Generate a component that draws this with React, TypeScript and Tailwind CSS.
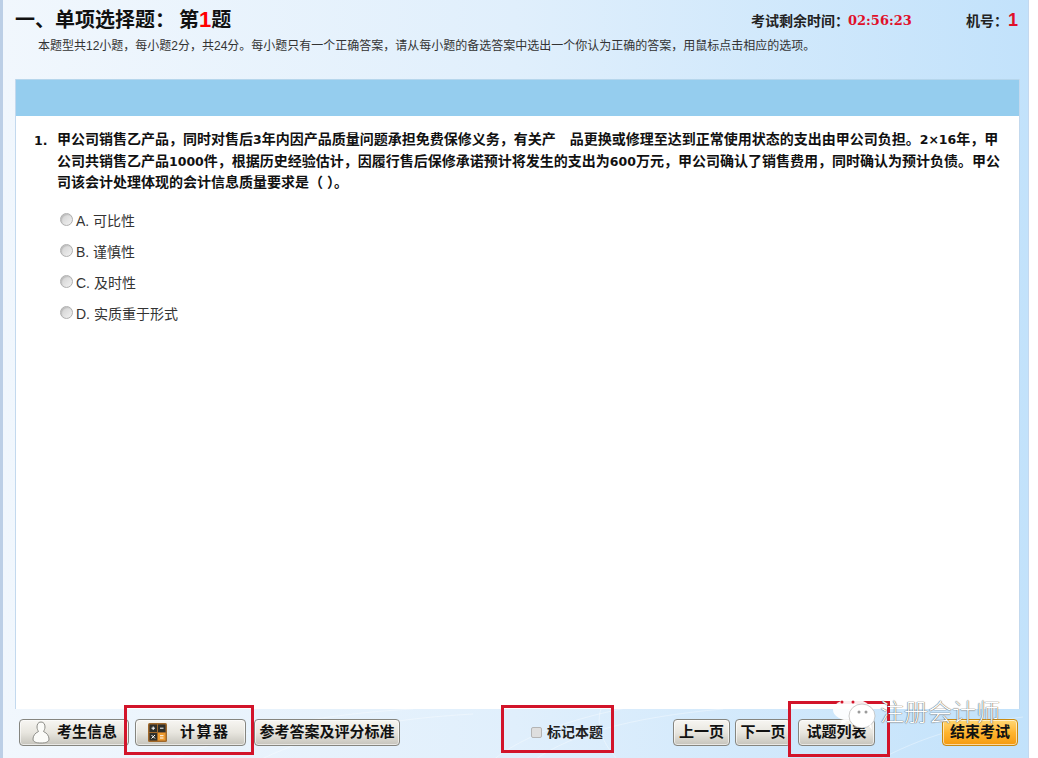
import React from "react";

const FONT = "font-['Liberation_Sans','Noto_Sans_CJK_SC',sans-serif]";
const NUM = "font-['DejaVu_Sans',sans-serif] text-[12.500px] leading-none";

function Btn({ w, children, className = "" }: { w: string; children: React.ReactNode; className?: string }) {
  return (
    <div
      className={`${w} h-[27px] shrink-0 flex items-center justify-center rounded-[4px] border border-[#85857f] bg-gradient-to-b from-[#f7f6f2] via-[#e8e6df] to-[#c6c4bc] text-[15px] font-bold text-[#111] shadow-[inset_0_0_0_1px_rgba(255,255,255,0.6)] ${className}`}
    >
      {children}
    </div>
  );
}

function Opt({ t }: { t: string }) {
  return (
    <div className="flex items-center h-[31px] text-[14px] text-[#333]">
      <span className="w-[13px] h-[13px] mr-[3px] -mt-[4px] rounded-full border border-[#b0b0b0] bg-gradient-to-br from-[#cfcfcf] to-[#f2f2f2] shadow-[inset_1px_1px_1px_rgba(0,0,0,0.12)]" />
      <span>{t}</span>
    </div>
  );
}

function Calc() {
  return (
    <svg width="19" height="19" viewBox="0 0 19 19">
      <rect width="19" height="19" rx="1.500" fill="#a0692c" />
      <rect x="1.500" y="1.500" width="7.500" height="7.500" fill="#2f2f2a" />
      <rect x="10" y="1.500" width="7.500" height="7.500" fill="#2f2f2a" />
      <rect x="1.500" y="10" width="7.500" height="7.500" fill="#2f2f2a" />
      <rect x="10" y="10" width="7.500" height="7.500" fill="#ee9a2e" />
      <path d="M3.500 5.200h3.500M5.200 3.500v3.500M12 5.200h3.500M3.500 12l3.500 3.500M7 12l-3.500 3.500M12 12.700h3.500M12 15h3.500" stroke="#fff" strokeWidth="1" fill="none" />
    </svg>
  );
}

function Person() {
  return (
    <svg width="18" height="23" viewBox="0 0 18 23">
      <path
        d="M9 1C6 1 5 3.500 5 6c0 2 1 3.500 1.500 4.500C3 12 1 15 1 18c0 3 3 4 8 4s8-1 8-4c0-3-2-6-5.500-7.500C12 9.500 13 8 13 6c0-2.500-1-5-4-5z"
        fill="#fbfbf8"
        stroke="#8d8d88"
        strokeWidth="1"
      />
    </svg>
  );
}

function RedBox({ className }: { className: string }) {
  return <div className={`absolute border-[3px] border-[#d2142a] pointer-events-none ${className}`} />;
}

export default function App() {
  return (
    <div className={`relative w-[1038px] h-[758px] overflow-hidden bg-white ${FONT}`}>
      <div className="w-[1029px] h-full flex flex-col border-l-[3px] border-r border-l-[#bccfe6] border-r-[#c4d8ee] bg-gradient-to-r from-[#f1f7fd] via-[#e0effc] to-[#c2e2fb]">
        <header className="h-[79px] shrink-0 pl-[12px] pr-[10px]">
          <div className="flex items-start justify-between pt-[6px]">
            <h1 className="text-[20px] leading-[28px] font-bold text-[#111]">
              一、单项选择题：<span className="ml-[4px]">第</span>
              <span className="text-[#f00] text-[22px]">1</span>题
            </h1>
            <div className="flex items-center h-[30px] text-[14px] font-bold text-[#222]">
              <span>考试剩余时间：</span>
              <span className="ml-[-1px] w-[65px] text-[#e0102a] text-[13px] font-['DejaVu_Serif',serif]">02:56:23</span>
              <span className="ml-[53px]">机号：</span>
              <span className="-mt-[2px] text-[18px] text-[#e0102a]">1</span>
            </div>
          </div>
          <p className="mt-[2px] pl-[23px] text-[12px] leading-[16px] text-[#333]">
            本题型共12小题，每小题2分，共24分。每小题只有一个正确答案，请从每小题的备选答案中选出一个你认为正确的答案，用鼠标点击相应的选项。
          </p>
        </header>

        <main className="mx-[12px] w-[1005px] flex-1 min-h-0 flex flex-col bg-white border-x border-[#c3d9ee]">
          <div className="h-[37px] shrink-0 bg-[#95cdee] border-t border-[#b6d6ec]" />
          <div className="pt-[13px] pl-[18px] pr-[18px]">
            <div className="flex text-[14px] leading-[21.500px] font-bold text-[#111]">
              <span className="w-[23px] shrink-0 pt-[1px] text-[12.500px] font-['DejaVu_Sans',sans-serif]">1.</span>
              <p className="w-[946px]">
                甲公司销售乙产品，同时对售后<span className={NUM}>3</span>年内因产品质量问题承担免费保修义务，有关产　品更换或修理至达到正常使用状态的支出由甲公司负担。<span className={NUM}>2×16</span>年，甲公司共销售乙产品<span className={NUM}>1000</span>件，根据历史经验估计，因履行售后保修承诺预计将发生的支出为<span className={NUM}>600</span>万元，甲公司确认了销售费用，同时确认为预计负债。甲公司该会计处理体现的会计信息质量要求是（ ）。
              </p>
            </div>
            <div className="mt-[12px] pl-[26px]">
              <Opt t="A. 可比性" />
              <Opt t="B. 谨慎性" />
              <Opt t="C. 及时性" />
              <Opt t="D. 实质重于形式" />
            </div>
          </div>
        </main>

        <footer className="relative isolate h-[49px] shrink-0 flex items-start pt-[10px] pl-[16px]">
          <svg className="absolute inset-0 -z-10" width="1025" height="49" viewBox="0 0 1025 49" fill="none" stroke="#fff" strokeOpacity="0.35">
            <path d="M480 60C520 20 600 0 680 -10" />
            <path d="M520 60C560 25 630 8 720 0" />
            <path d="M600 -5C590 15 600 40 625 60" />
            <path d="M150 60C230 20 320 5 410 0" />
            <path d="M240 60C300 25 380 10 470 5" />
            <path d="M860 60C910 30 960 15 1020 8" />
          </svg>
          <Btn w="w-[110px]" className="justify-start pl-[12px] gap-[7px]"><Person />考生信息</Btn>
          <Btn w="w-[111px]" className="ml-[6px] justify-start pl-[12px] gap-[13px] tracking-[1.500px]"><Calc />计算器</Btn>
          <Btn w="w-[146px]" className="ml-[8px]">参考答案及评分标准</Btn>
          <div className="ml-[131px] flex items-center pt-[3px] text-[14px] font-bold text-[#222]">
            <span className="w-[11px] h-[11px] mr-[5px] rounded-[2px] border border-[#b4b4b4] bg-[#dedede]" />
            标记本题
          </div>
          <Btn w="w-[57px]" className="ml-[70px]">上一页</Btn>
          <Btn w="w-[56px]" className="ml-[5px]">下一页</Btn>
          <Btn w="w-[77px]" className="ml-[7px]">试题列表</Btn>
          <Btn w="w-[76px]" className="ml-[67px] !border-[#c98a10] !from-[#ffd873] !via-[#ffb52e] !to-[#f59a0c]">结束考试</Btn>
        </footer>
      </div>

      <RedBox className="left-[124px] top-[705px] w-[130px] h-[50px]" />
      <RedBox className="left-[501px] top-[705px] w-[113px] h-[48px]" />
      <RedBox className="left-[788px] top-[701px] w-[102px] h-[56px]" />

      <div className="absolute left-[832px] top-[696px] flex items-center">
        <svg width="52" height="36" viewBox="0 0 52 36">
          <ellipse cx="20" cy="14" rx="19" ry="11" fill="#fff" fillOpacity="0.92" />
          <path d="M10 24l-2 5 7-3z" fill="#fff" fillOpacity="0.92" />
          <ellipse cx="30" cy="20" rx="13" ry="12" fill="#fff" stroke="#b5b5b5" strokeWidth="0.7" />
          <path d="M37 30l3 4-1-6z" fill="#fff" />
          <circle cx="27" cy="16" r="1.500" fill="#9a9a9a" />
          <circle cx="34" cy="16" r="1.500" fill="#9a9a9a" />
          <circle cx="10" cy="6" r="1.500" fill="#d2142a" />
          <circle cx="21" cy="6" r="1.500" fill="#d2142a" />
        </svg>
        <span className="-ml-[4px] mb-[6px] font-['Noto_Sans_CJK_SC',sans-serif] font-extralight text-[24px] leading-[28px] text-white [text-shadow:0_0_1px_#555,0_0_1px_#555]">
          注册会计师
        </span>
      </div>
    </div>
  );
}
